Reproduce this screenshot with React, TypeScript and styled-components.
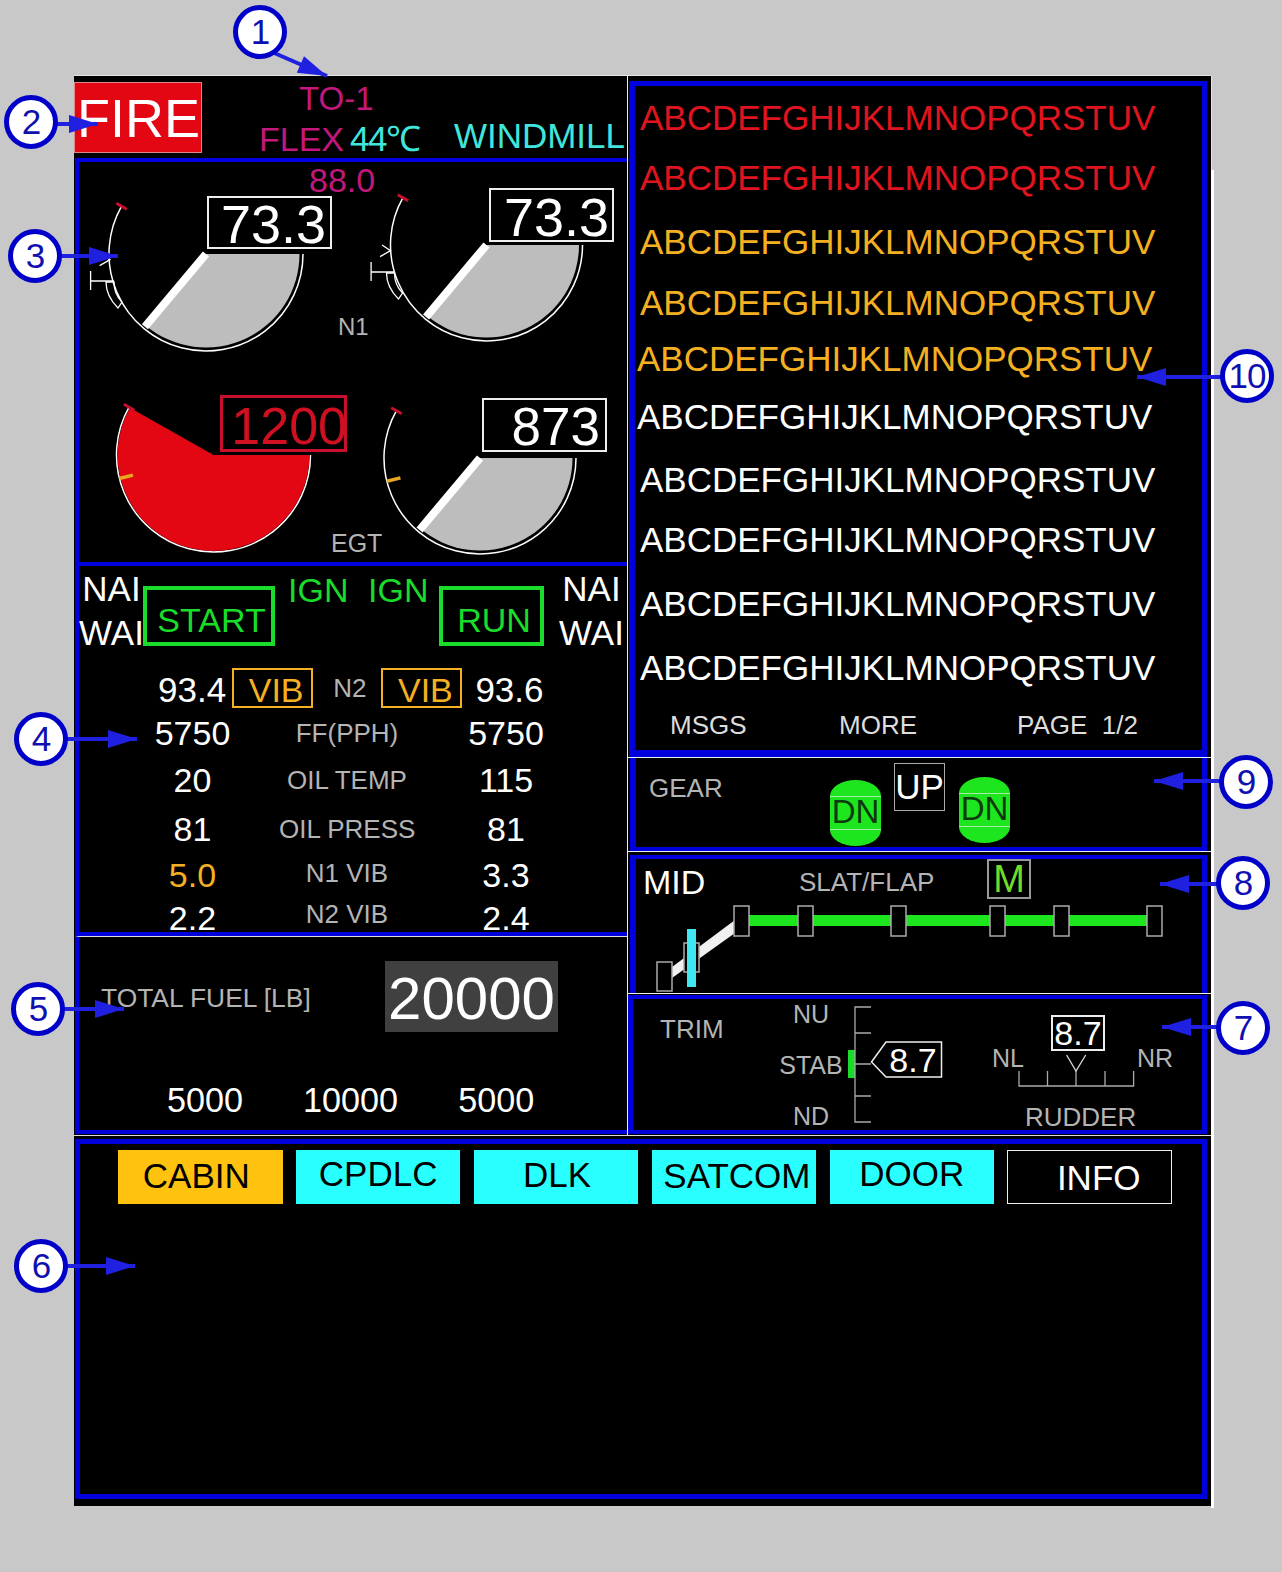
import React from 'react';
import styled, { createGlobalStyle } from 'styled-components';

const BLUE = '#0000dc';
const MAGENTA = '#c2187c';
const CYAN = '#40e6dc';
const GREEN = '#1adc2a';
const AMBER = '#f5b022';
const RED = '#e30613';
const LABEL = '#b4b4b4';
const ALPHABET = 'ABCDEFGHIJKLMNOPQRSTUV';

const GlobalStyle = createGlobalStyle`
  html, body {
    margin: 0;
    background: #c8c8c8;
    font-family: "Liberation Sans", Arial, sans-serif;
  }
`;

const Stage = styled.div`
  position: relative;
  box-sizing: border-box;
  width: 1282px;
  height: 1572px;
  padding: 76px 0 0 74px;
  overflow: hidden;
`;

const Display = styled.div`
  position: relative;
  width: 1137px;
  height: 1430px;
  background: #000;
  color: #fff;
  box-shadow: 0 -1px 0 #e4e4e4, 1px 0 0 #e4e4e4;

  &::after {
    content: '';
    position: absolute;
    top: 94px;
    bottom: -2px;
    right: -3px;
    width: 3px;
    background: #fff;
  }
`;

const Upper = styled.div`
  display: grid;
  grid-template-columns: 553px 584px;
  height: 1060px;
  box-sizing: border-box;
  border-bottom: 1px solid #ddd;
`;

const LeftColumn = styled.div`
  display: flex;
  flex-direction: column;
`;

const RightColumn = styled.div`
  display: flex;
  flex-direction: column;
  padding-top: 5px;
  border-left: 1px solid #eee;
  box-sizing: border-box;
`;

const Panel = styled.section`
  box-sizing: border-box;
  border: 4px solid ${BLUE};
`;

const LeftPanel = styled(Panel)`
  margin-left: 1px;
  border-right: 0;
`;

const RightPanel = styled(Panel)`
  margin: 0 4px 0 2px;
  border-width: 4px 5px 4px 6px;
`;

const Separator = styled.div`
  height: 1px;
  flex: none;
  background: #eee;
`;

/* top bar */
const TopBar = styled.header`
  display: flex;
  align-items: flex-start;
  height: 82px;
`;

const FireBox = styled.div`
  box-sizing: border-box;
  width: 128px;
  height: 71px;
  margin-top: 6px;
  padding-left: 2px;
  background: ${RED};
  border: 1px solid #d88;
  font-size: 54px;
  line-height: 71px;
  color: #fff;
`;

const Limits = styled.div`
  margin: 8px 0 0 57px;
  display: flex;
  flex-direction: column;
`;

const LimitMode = styled.div`
  margin-left: 40px;
  font-size: 33px;
  line-height: 30px;
  color: ${MAGENTA};
`;

const LimitRow = styled.div`
  display: flex;
  gap: 6px;
  margin-top: 10px;
  line-height: 30px;
`;

const FlexLabel = styled.span`
  font-size: 34px;
  color: ${MAGENTA};
`;

const FlexTemp = styled.span`
  font-size: 35px;
  letter-spacing: -1.5px;
  color: ${CYAN};
`;

const Windmill = styled.div`
  margin: 44px 2px 0 auto;
  font-size: 35px;
  line-height: 31px;
  color: ${CYAN};
`;

/* engine gauges */
const EnginePanel = styled(LeftPanel)`
  height: 408px;
  display: grid;
  grid-template-columns: 230px 66px 1fr;
  grid-template-rows: 200px 200px;
`;

const GaugeCell = styled.div`
  position: relative;
  svg {
    display: block;
    overflow: visible;
  }
`;

const Readout = styled.div<{ $left: number; $top: number; $height: number; $size: number; $pad: number; $alert?: boolean }>`
  position: absolute;
  left: ${(p) => p.$left}px;
  top: ${(p) => p.$top}px;
  box-sizing: border-box;
  width: ${(p) => (p.$alert ? 127 : 125)}px;
  height: ${(p) => p.$height}px;
  padding-right: ${(p) => p.$pad}px;
  border: ${(p) => (p.$alert ? `3px solid #c8102e` : `2px solid #eee`)};
  background: ${(p) => (p.$alert ? 'transparent' : '#000')};
  color: ${(p) => (p.$alert ? '#d01020' : '#fff')};
  font-size: ${(p) => p.$size}px;
  line-height: ${(p) => p.$height}px;
  text-align: right;
  white-space: nowrap;
`;

const AlertDigits = styled.span`
  position: relative;
  left: 3px;
`;

const MidColumn = styled.div<{ $end: number }>`
  display: flex;
  flex-direction: column;
  justify-content: space-between;
  padding-bottom: ${(p) => p.$end}px;
`;

const TargetValue = styled.div`
  font-size: 34px;
  line-height: 36px;
  text-align: center;
  color: ${MAGENTA};
`;

const GaugeName = styled.div<{ $indent: number; $size: number }>`
  margin-left: ${(p) => p.$indent}px;
  margin-top: auto;
  font-size: ${(p) => p.$size}px;
  line-height: 30px;
  color: ${LABEL};
`;

/* engine status */
const StatusPanel = styled(LeftPanel)`
  height: 370px;
  border-top: 0;
  overflow: hidden;
`;

const ModeRow = styled.div`
  display: flex;
  align-items: flex-start;
  height: 82px;
`;

const AntiIce = styled.div<{ $gap: number }>`
  width: 65px;
  margin: 1px 0 0 ${(p) => p.$gap}px;
  flex: none;
  text-align: center;
  font-size: 35px;
  line-height: 44px;
`;

const EngineMode = styled.div<{ $width: number; $gap: number }>`
  box-sizing: border-box;
  width: ${(p) => p.$width}px;
  height: 60px;
  margin: 20px 0 0 ${(p) => p.$gap}px;
  padding: 5px 0 0 5px;
  border: 4px solid ${GREEN};
  text-align: center;
  font-size: 34px;
  line-height: 50px;
  color: ${GREEN};
`;

const Ignition = styled.div<{ $gap: number }>`
  width: 60px;
  margin: 2px 0 0 ${(p) => p.$gap}px;
  text-align: center;
  font-size: 34px;
  line-height: 44px;
  color: ${GREEN};
`;

const SpeedRow = styled.div`
  display: flex;
  align-items: center;
  height: 40px;
  margin-top: 20px;
  padding-left: 79px;
`;

const Value = styled.span<{ $gap?: number; $tone?: string }>`
  margin-left: ${(p) => p.$gap ?? 0}px;
  font-size: 34px;
  color: ${(p) => p.$tone ?? '#fff'};
`;

const SpeedValue = styled(Value)`
  padding-top: 4px;
  font-size: 35px;
`;

const VibBox = styled.div<{ $gap: number }>`
  box-sizing: border-box;
  width: 81px;
  height: 40px;
  margin-left: ${(p) => p.$gap}px;
  padding: 2px 0 0 7px;
  border: 2px solid ${AMBER};
  text-align: center;
  font-size: 34px;
  line-height: 36px;
  color: ${AMBER};
`;

const SmallLabel = styled.span<{ $gap?: number; $raise?: number }>`
  margin-left: ${(p) => p.$gap ?? 0}px;
  padding-bottom: ${(p) => p.$raise ?? 0}px;
  font-size: 26px;
  white-space: nowrap;
  color: ${LABEL};
`;

const DataGrid = styled.div`
  display: grid;
  grid-template-columns: 200px 136px 207px;
  grid-template-rows: 44px 50px 48px 45px 41px;
  margin-top: 3px;
  align-items: center;
  text-align: center;
`;

const LeftValue = styled(Value)`
  padding-left: 27px;
`;

const RightValue = styled(Value)`
  padding-right: 25px;
`;

/* fuel */
const FuelPanel = styled(LeftPanel)`
  height: 198px;
  border-top: 1px solid #ddd;
`;

const FuelTotal = styled.div`
  display: flex;
  align-items: center;
  height: 71px;
  margin-top: 24px;
  padding-left: 22px;
`;

const FuelLabel = styled.span`
  width: 284px;
  padding-top: 4px;
  font-size: 26.4px;
  color: ${LABEL};
`;

const FuelValue = styled.span`
  display: block;
  width: 173px;
  height: 71px;
  background: #404040;
  text-align: center;
  font-size: 60px;
  line-height: 75px;
`;

const Tanks = styled.div`
  display: flex;
  gap: 60px;
  margin-top: 48px;
  padding-left: 88px;
  font-size: 34.2px;
  line-height: 40px;
`;

/* messages */
const MessagePanel = styled(RightPanel)`
  height: 676px;
  margin-left: 1px;
  border-width: 5px 5px 7px 6px;
  padding: 12px 0 0 5px;
`;

const Message = styled.div<{ $tone: string; $gap: number; $shift: number }>`
  margin: ${(p) => p.$gap}px 0 0 ${(p) => p.$shift}px;
  font-size: 35px;
  line-height: 40px;
  color: ${(p) => p.$tone};
`;

const MessageFooter = styled.div`
  display: grid;
  grid-template-columns: 169px 178px 1fr;
  margin: 22px 0 0 30px;
  font-size: 26px;
  line-height: 30px;
  white-space: pre;
  color: #ddd;
`;

/* gear */
const GearPanel = styled(RightPanel)`
  height: 93px;
  border-top: 0;
  display: flex;
  align-items: flex-start;
  padding-left: 13px;
`;

const GearLabel = styled.span`
  width: 181px;
  margin-top: 14px;
  font-size: 26px;
  line-height: 32px;
  color: ${LABEL};
`;

const Pill = styled.div<{ $top: number }>`
  width: 51px;
  margin-top: ${(p) => p.$top}px;
  flex: none;
  color: #0c3a0c;
  text-align: center;
`;

const PillCap = styled.div<{ $down?: boolean }>`
  height: 16px;
  background: #1ee61e;
  border-radius: ${(p) => (p.$down ? '0 0 50% 50% / 0 0 100% 100%' : '50% 50% 0 0 / 100% 100% 0 0')};
`;

const PillBody = styled.div`
  box-sizing: border-box;
  height: 34px;
  background: #1ee61e;
  border-top: 1px solid #a8e8a8;
  border-bottom: 1px solid #a8e8a8;
  font-size: 33px;
  line-height: 30px;
  white-space: nowrap;
`;

const GearUp = styled.div`
  box-sizing: border-box;
  width: 51px;
  height: 48px;
  margin: 5px 14px 0 13px;
  flex: none;
  border: 1px solid #aaa;
  text-align: center;
  font-size: 35px;
  line-height: 46px;
`;

/* slat flap */
const FlapPanel = styled(RightPanel)`
  height: 138px;
  margin-top: 3px;
  border-bottom: 0;
  svg {
    display: block;
    overflow: visible;
    margin: -1px 0 0 -1px;
  }
`;

const FlapHeader = styled.div`
  display: flex;
  align-items: center;
  height: 40px;
  padding-left: 7px;
`;

const MidLabel = styled.span`
  width: 156px;
  padding-top: 6px;
  font-size: 34px;
`;

const FlapLabel = styled.span`
  width: 188px;
  padding-top: 6px;
  font-size: 26px;
  color: ${LABEL};
`;

const ManualBox = styled.div`
  box-sizing: border-box;
  width: 44px;
  height: 40px;
  border: 2px solid #999;
  text-align: center;
  font-size: 38px;
  line-height: 36px;
  color: #6fdc2a;
`;

/* trim */
const TrimPanel = styled(RightPanel)`
  height: 139px;
  margin: 1px 4px 0 0;
  border-left-width: 5px;
  display: flex;
  align-items: flex-start;
  padding-left: 27px;
  svg {
    display: block;
    overflow: visible;
    flex: none;
  }
`;

const TrimLabel = styled.span`
  width: 119px;
  margin-top: 15px;
  font-size: 26px;
  line-height: 30px;
  color: ${LABEL};
`;

const StabLabels = styled.div`
  width: 64px;
  flex: none;
  display: flex;
  flex-direction: column;
  align-items: center;
  gap: 21px;
  font-size: 25px;
  line-height: 30px;
  white-space: nowrap;
  color: ${LABEL};
`;

const Rudder = styled.div`
  width: 182px;
  margin-left: 46px;
  flex: none;
`;

const RudderValue = styled.div`
  box-sizing: border-box;
  width: 54px;
  height: 36px;
  margin: 16px 0 0 59px;
  border: 2px solid #eee;
  text-align: center;
  font-size: 34px;
  line-height: 32px;
`;

const RudderScale = styled.div`
  display: flex;
  align-items: flex-start;
  margin-top: -7px;
  font-size: 25px;
  line-height: 28px;
  color: ${LABEL};
`;

const RudderSide = styled.span`
  width: 32px;
  flex: none;
`;

const RudderName = styled.div`
  margin: 14px 0 0 33px;
  font-size: 26px;
  line-height: 30px;
  color: ${LABEL};
`;

/* system tabs */
const TabPanel = styled(Panel)`
  height: 360px;
  margin: 3px 4px 0 1px;
  border-width: 5px;
  display: flex;
  align-items: flex-start;
  gap: 13.4px;
  padding: 6px 0 0 38px;
`;

const Tab = styled.div<{ $tone: 'amber' | 'cyan' | 'plain'; $nudge?: number; $raise?: number }>`
  box-sizing: border-box;
  width: 164.5px;
  height: 54px;
  text-indent: ${(p) => p.$nudge ?? 0}px;
  background: ${(p) => (p.$tone === 'amber' ? '#ffc20e' : p.$tone === 'cyan' ? '#2affff' : '#000')};
  border: ${(p) => (p.$tone === 'plain' ? '1px solid #eee' : '0')};
  color: ${(p) => (p.$tone === 'plain' ? '#fff' : '#000')};
  text-align: center;
  font-size: 35px;
  line-height: ${(p) => 53 - (p.$raise ?? 0) * 2}px;
`;

/* annotations */
const ArrowLayer = styled.svg`
  position: absolute;
  inset: 0;
  pointer-events: none;
`;

const Callout = styled.div<{ $x: number; $y: number }>`
  position: absolute;
  left: ${(p) => p.$x - 27}px;
  top: ${(p) => p.$y - 27}px;
  box-sizing: border-box;
  width: 54px;
  height: 54px;
  border: 5px solid #0000c8;
  border-radius: 50%;
  background: #fff;
  text-align: center;
  font-size: 35px;
  line-height: 43px;
  letter-spacing: -1px;
  color: #1010b0;
`;

const polar = (cx: number, cy: number, r: number, deg: number) => {
  const a = (deg * Math.PI) / 180;
  return [cx + r * Math.cos(a), cy + r * Math.sin(a)];
};

interface GaugeProps {
  cx: number;
  cy: number;
  r: number;
  width: number;
  sweep: number;
  fill: string;
  needle?: boolean;
  amberTick?: boolean;
  reverser?: boolean;
}

function Gauge(props: GaugeProps) {
  const { cx, cy, r, width, sweep, fill, needle, amberTick, reverser } = props;
  const [ax, ay] = polar(cx, cy, r, 209.5);
  const inner = needle ? r - 3.5 : r - 1;
  const [sx, sy] = polar(cx, cy, inner, sweep);
  const [nx, ny] = polar(cx, cy, r - 2, sweep);
  const [t1x, t1y] = polar(cx, cy, r - 6, 209.5);
  const [t2x, t2y] = polar(cx, cy, r + 6, 209.5);
  const [a1x, a1y] = polar(cx, cy, r - 14, 166);
  const [a2x, a2y] = polar(cx, cy, r, 166);

  return (
    <svg width={width} height={200}>
      <path d={`M${cx + r} ${cy} A${r} ${r} 0 1 1 ${ax} ${ay}`} fill='none' stroke='#fff' strokeWidth={1.5} />
      <path
        d={`M${cx} ${cy} L${cx + inner} ${cy} A${inner} ${inner} 0 ${sweep > 180 ? 1 : 0} 1 ${sx} ${sy} Z`}
        fill={fill}
      />
      {needle && <line x1={cx} y1={cy} x2={nx} y2={ny} stroke='#fff' strokeWidth={8} />}
      <line x1={t1x} y1={t1y} x2={t2x} y2={t2y} stroke='#c8102e' strokeWidth={3} />
      {amberTick && <line x1={a1x} y1={a1y} x2={a2x} y2={a2y} stroke='#e8a820' strokeWidth={3.5} />}
      {reverser && (
        <g transform={`translate(${cx} ${cy})`} fill='none' stroke='#fff' strokeWidth={1.3}>
          <path d='M-104.4 0 L-96 5.6 L-106.4 11.6' />
          <path d='M-115.4 17 V36 M-115.4 27 H-92' />
          <path d='M-100 28 Q-100 42 -88 54 L-84 48 Q-92 40 -92 28 Z' />
        </g>
      )}
    </svg>
  );
}

const flapNodes = [99, 163, 256, 355, 419, 512];
const messages = [
  { tone: '#e0141e', gap: 0, shift: 0 },
  { tone: '#e0141e', gap: 20, shift: 0 },
  { tone: AMBER, gap: 24, shift: 0 },
  { tone: AMBER, gap: 21, shift: 0 },
  { tone: AMBER, gap: 16, shift: -3 },
  { tone: '#fff', gap: 18, shift: -3 },
  { tone: '#fff', gap: 23, shift: 0 },
  { tone: '#fff', gap: 20, shift: 0 },
  { tone: '#fff', gap: 24, shift: 0 },
  { tone: '#fff', gap: 24, shift: 0 },
];

const engineRows = [
  { left: '5750', label: 'FF(PPH)', right: '5750', raise: 0 },
  { left: '20', label: 'OIL TEMP', right: '115', raise: 0 },
  { left: '81', label: 'OIL PRESS', right: '81', raise: 0 },
  { left: '5.0', label: 'N1 VIB', right: '3.3', raise: 4, tone: AMBER },
  { left: '2.2', label: 'N2 VIB', right: '2.4', raise: 8 },
];

const callouts = [
  { n: 1, x: 260, y: 32, from: [272, 52], to: [327, 76] },
  { n: 2, x: 31, y: 122, from: [57, 124], to: [98, 124] },
  { n: 3, x: 35, y: 256, from: [61, 256], to: [118, 256] },
  { n: 4, x: 41, y: 739, from: [67, 739], to: [137, 739] },
  { n: 5, x: 38, y: 1009, from: [64, 1009], to: [124, 1009] },
  { n: 6, x: 41, y: 1266, from: [67, 1266], to: [135, 1266] },
  { n: 7, x: 1243, y: 1028, from: [1217, 1027], to: [1162, 1027] },
  { n: 8, x: 1243, y: 883, from: [1217, 884], to: [1160, 884] },
  { n: 9, x: 1246, y: 782, from: [1220, 781], to: [1154, 781] },
  { n: 10, x: 1247, y: 376, from: [1221, 377], to: [1137, 377] },
];

function arrowHead(from: number[], to: number[]) {
  const dx = to[0] - from[0];
  const dy = to[1] - from[1];
  const len = Math.hypot(dx, dy);
  const ux = dx / len;
  const uy = dy / len;
  const bx = to[0] - ux * 29;
  const by = to[1] - uy * 29;
  return `${to[0]},${to[1]} ${bx - uy * 9},${by + ux * 9} ${bx + uy * 9},${by - ux * 9}`;
}

export default function App() {
  return (
    <Stage>
      <GlobalStyle />
      <Display>
        <Upper>
          <LeftColumn>
            <TopBar>
              <FireBox>FIRE</FireBox>
              <Limits>
                <LimitMode>TO-1</LimitMode>
                <LimitRow>
                  <FlexLabel>FLEX</FlexLabel>
                  <FlexTemp>44℃</FlexTemp>
                </LimitRow>
              </Limits>
              <Windmill>WINDMILL</Windmill>
            </TopBar>

            <EnginePanel>
              <GaugeCell>
                <Gauge cx={127} cy={92} r={97} width={230} sweep={130} fill='#bdbdbd' needle reverser />
                <Readout $left={128} $top={34} $height={53} $size={54} $pad={4}>73.3</Readout>
              </GaugeCell>
              <MidColumn $end={20}>
                <TargetValue>88.0</TargetValue>
                <GaugeName $indent={29} $size={24}>N1</GaugeName>
              </MidColumn>
              <GaugeCell>
                <Gauge cx={111.5} cy={83} r={96} width={247} sweep={130} fill='#bdbdbd' needle reverser />
                <Readout $left={114} $top={26} $height={54} $size={54} $pad={3}>73.3</Readout>
              </GaugeCell>

              <GaugeCell>
                <Gauge cx={134.5} cy={93} r={97} width={230} sweep={209.5} fill={RED} amberTick />
                <Readout $left={141} $top={33} $height={57} $size={52} $pad={0} $alert><AlertDigits>1200</AlertDigits></Readout>
              </GaugeCell>
              <MidColumn $end={4}>
                <GaugeName $indent={22} $size={25}>EGT</GaugeName>
              </MidColumn>
              <GaugeCell>
                <Gauge cx={105} cy={96} r={96} width={247} sweep={130} fill='#bdbdbd' needle amberTick />
                <Readout $left={107} $top={36} $height={54} $size={53} $pad={5}>873</Readout>
              </GaugeCell>
            </EnginePanel>

            <StatusPanel>
              <ModeRow>
                <AntiIce $gap={0}>NAI<br />WAI</AntiIce>
                <EngineMode $width={132} $gap={-1}>START</EngineMode>
                <Ignition $gap={13}>IGN</Ignition>
                <Ignition $gap={20}>IGN</Ignition>
                <EngineMode $width={105} $gap={11}>RUN</EngineMode>
                <AntiIce $gap={15}>NAI<br />WAI</AntiIce>
              </ModeRow>
              <SpeedRow>
                <SpeedValue>93.4</SpeedValue>
                <VibBox $gap={6}>VIB</VibBox>
                <SmallLabel $gap={20}>N2</SmallLabel>
                <VibBox $gap={15}>VIB</VibBox>
                <SpeedValue $gap={13}>93.6</SpeedValue>
              </SpeedRow>
              <DataGrid>
                {engineRows.map((row) => (
                  <React.Fragment key={row.label}>
                    <LeftValue $tone={row.tone}>{row.left}</LeftValue>
                    <SmallLabel $raise={row.raise}>{row.label}</SmallLabel>
                    <RightValue>{row.right}</RightValue>
                  </React.Fragment>
                ))}
              </DataGrid>
            </StatusPanel>

            <FuelPanel>
              <FuelTotal>
                <FuelLabel>TOTAL FUEL [LB]</FuelLabel>
                <FuelValue>20000</FuelValue>
              </FuelTotal>
              <Tanks>
                <span>5000</span>
                <span>10000</span>
                <span>5000</span>
              </Tanks>
            </FuelPanel>
          </LeftColumn>

          <RightColumn>
            <MessagePanel>
              {messages.map((m, i) => (
                <Message key={i} $tone={m.tone} $gap={m.gap} $shift={m.shift}>{ALPHABET}</Message>
              ))}
              <MessageFooter>
                <span>MSGS</span>
                <span>MORE</span>
                <span>PAGE  1/2</span>
              </MessageFooter>
            </MessagePanel>
            <Separator />

            <GearPanel>
              <GearLabel>GEAR</GearLabel>
              <Pill $top={22}>
                <PillCap />
                <PillBody>DN</PillBody>
                <PillCap $down />
              </Pill>
              <GearUp>UP</GearUp>
              <Pill $top={19}>
                <PillCap />
                <PillBody>DN</PillBody>
                <PillCap $down />
              </Pill>
            </GearPanel>
            <Separator />

            <FlapPanel>
              <FlapHeader>
                <MidLabel>MID</MidLabel>
                <FlapLabel>SLAT/FLAP</FlapLabel>
                <ManualBox>M</ManualBox>
              </FlapHeader>
              <svg width={568} height={92}>
                <rect x={114} y={17} width={398} height={11} fill='#1ee61e' />
                <polygon points='100,22 100,35 37,80 37,69' fill='#f0f0f0' />
                {flapNodes.map((x) => (
                  <rect key={x} x={x} y={8} width={15} height={30} fill='#000' stroke='#aaa' strokeWidth={1.5} />
                ))}
                <rect x={22} y={64} width={15} height={29} fill='#000' stroke='#aaa' strokeWidth={1.5} />
                <rect x={49} y={45} width={15} height={29} fill='#000' stroke='#aaa' strokeWidth={1.5} />
                <rect x={52} y={31} width={9} height={58} fill='#40e6f0' />
              </svg>
            </FlapPanel>
            <Separator />

            <TrimPanel>
              <TrimLabel>TRIM</TrimLabel>
              <StabLabels>
                <span>NU</span>
                <span>STAB</span>
                <span>ND</span>
              </StabLabels>
              <svg width={103} height={131}>
                <rect x={5} y={51} width={7} height={28} fill={GREEN} />
                <path d='M28 8 H12 V123 H28 M12 34 H28 M12 65 H28 M12 97 H28' fill='none' stroke='#aaa' strokeWidth={1.3} />
                <polygon points='28.5,63 43,43 98.5,43 98.5,78 43,78' fill='#000' stroke='#eee' strokeWidth={1.5} />
                <text x={70} y={73} textAnchor='middle' fontSize={34} fill='#fff' fontFamily='"Liberation Sans", Arial, sans-serif'>8.7</text>
              </svg>
              <Rudder>
                <RudderValue>8.7</RudderValue>
                <RudderScale>
                  <RudderSide>NL</RudderSide>
                  <svg width={113} height={44}>
                    <path d='M-5 27 V42 H109.6 V27 M23.5 27 V42 M52 27 V42 M81 27 V42' fill='none' stroke='#aaa' strokeWidth={1.3} />
                    <path d='M42.6 11 L52 27 L61.7 11' fill='none' stroke='#ddd' strokeWidth={1.3} />
                  </svg>
                  <RudderSide>NR</RudderSide>
                </RudderScale>
                <RudderName>RUDDER</RudderName>
              </Rudder>
            </TrimPanel>
          </RightColumn>
        </Upper>

        <TabPanel>
          <Tab $tone='amber' $nudge={-8} $raise={1}>CABIN</Tab>
          <Tab $tone='cyan' $raise={3}>CPDLC</Tab>
          <Tab $tone='cyan' $raise={2} $nudge={2}>DLK</Tab>
          <Tab $tone='cyan' $raise={1} $nudge={6}>SATCOM</Tab>
          <Tab $tone='cyan' $raise={3}>DOOR</Tab>
          <Tab $tone='plain' $nudge={18}>INFO</Tab>
        </TabPanel>
      </Display>

      <ArrowLayer width={1282} height={1572}>
        {callouts.map((c) => (
          <g key={c.n} fill='#2020e0' stroke='none'>
            <line x1={c.from[0]} y1={c.from[1]} x2={c.to[0]} y2={c.to[1]} stroke='#2020e0' strokeWidth={4} />
            <polygon points={arrowHead(c.from, c.to)} />
          </g>
        ))}
      </ArrowLayer>
      {callouts.map((c) => (
        <Callout key={c.n} $x={c.x} $y={c.y}>{c.n}</Callout>
      ))}
    </Stage>
  );
}
